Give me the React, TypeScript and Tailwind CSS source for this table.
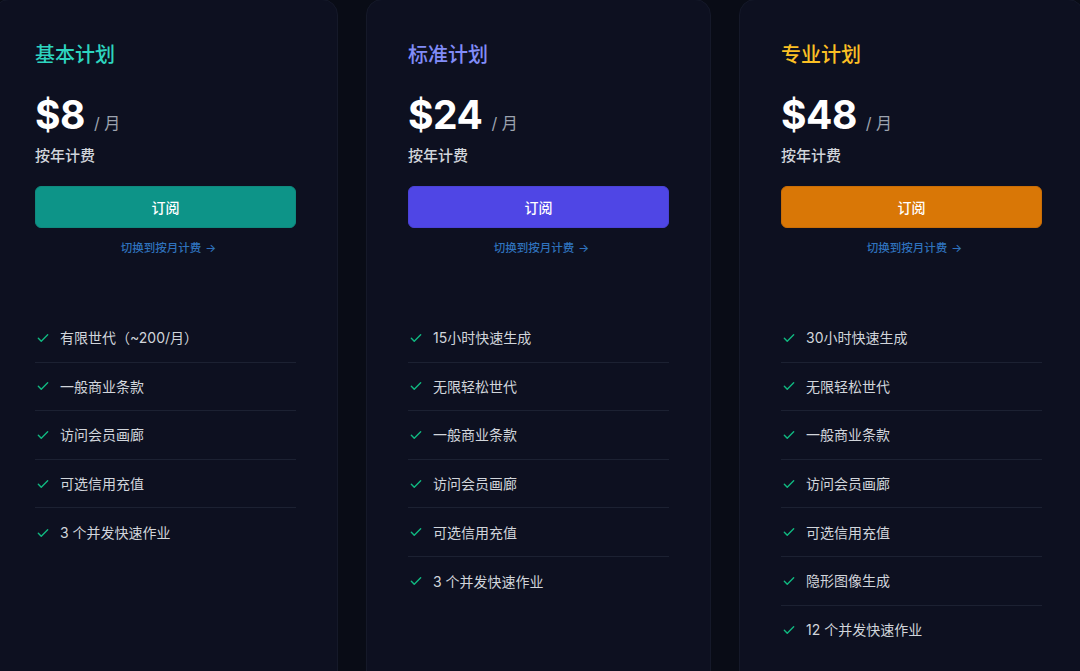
import React from "react";

type Plan = {
  name: string;
  nameColor: string;
  price: string;
  btn: string;
  btnBorder: string;
  features: string[];
};

const plans: Plan[] = [
  {
    name: "基本计划",
    nameColor: "text-[#2dd4bf]",
    price: "$8",
    btn: "bg-[#0d9488]",
    btnBorder: "border-[#0f8a7e]",
    features: ["有限世代（~200/月）", "一般商业条款", "访问会员画廊", "可选信用充值", "3 个并发快速作业"],
  },
  {
    name: "标准计划",
    nameColor: "text-[#818cf8]",
    price: "$24",
    btn: "bg-[#4f46e5]",
    btnBorder: "border-[#4a42d6]",
    features: ["15小时快速生成", "无限轻松世代", "一般商业条款", "访问会员画廊", "可选信用充值", "3 个并发快速作业"],
  },
  {
    name: "专业计划",
    nameColor: "text-[#fbbf24]",
    price: "$48",
    btn: "bg-[#d97706]",
    btnBorder: "border-[#c96d06]",
    features: ["30小时快速生成", "无限轻松世代", "一般商业条款", "访问会员画廊", "可选信用充值", "隐形图像生成", "12 个并发快速作业"],
  },
];

function Check() {
  return (
    <svg width="14" height="14" viewBox="0 0 24 24" fill="none" stroke="#10b981" strokeWidth="2.4" strokeLinecap="round" strokeLinejoin="round" className="shrink-0">
      <path d="M4 12.5l5 5L20 6.5" />
    </svg>
  );
}

function Card({ plan }: { plan: Plan }) {
  return (
    <div className="w-[345px] shrink-0 h-[720px] rounded-[16px] border border-[#151929] bg-[#0d1020] px-[41px] pt-[41px]">
      <h2 className={`text-[20px] leading-[28px] font-medium ${plan.nameColor}`}>{plan.name}</h2>
      <div className="mt-[24px] flex items-baseline">
        <span className="text-[39px] leading-[44px] font-bold text-white tracking-[-0.5px]">{plan.price}</span>
        <span className="ml-[9px] text-[16px] text-[#9ca3af]">/ 月</span>
      </div>
      <div className="mt-[8px] text-[15px] leading-[22px] font-medium text-[#d1d5db]">按年计费</div>
      <button className={`mt-[19px] w-full h-[42px] rounded-[6px] border ${plan.btn} ${plan.btnBorder} text-[14px] font-medium text-white`}>
        订阅
      </button>
      <div className="mt-[12px] pl-[6px] flex justify-center text-[11.5px] leading-[16px] text-[#2f72bd] font-medium">
        切换到按月计费 <span className="ml-[4px]">→</span>
      </div>
      <ul className="mt-[58px]">
        {plan.features.map((f, i) => (
          <li
            key={f}
            className={`h-[48.6px] flex items-center gap-[10px] pl-[1px] text-[14px] text-[#d1d5db] ${
              i < plan.features.length - 1 ? "border-b border-[#1c2132]" : ""
            }`}
          >
            <Check />
            <span>{f}</span>
          </li>
        ))}
      </ul>
    </div>
  );
}

export default function App() {
  return (
    <div
      className="w-[1080px] h-[671px] overflow-hidden bg-[#090c16]"
      style={{ fontFamily: 'Inter, "Noto Sans CJK SC", sans-serif' }}
    >
      <div className="flex gap-[28px] ml-[-7px] mt-[-1px]">
        {plans.map((p) => (
          <Card key={p.name} plan={p} />
        ))}
      </div>
    </div>
  );
}
